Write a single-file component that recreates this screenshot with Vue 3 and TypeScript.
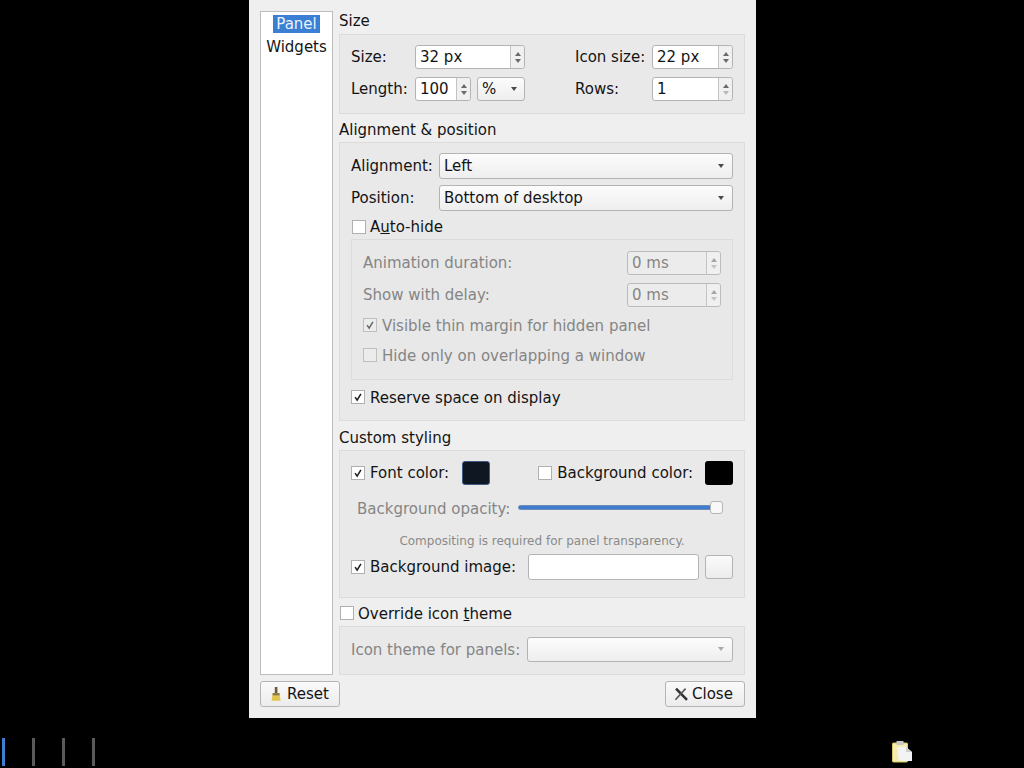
<script setup lang="ts">
const marks: string[] = ['active', '', '', '']
</script>

<template>
  <div class="desktop">
    <div class="dialog">
      <div class="main">
        <ul class="nav">
          <li><span class="sel">Panel</span></li>
          <li>Widgets</li>
        </ul>
        <div class="content">
          <div class="head first">Size</div>
          <section class="frame size-frame">
            <div class="row">
              <label class="l-size">Size:</label>
              <div class="spin w110"><span class="val">32 px</span><span class="arrows"><i class="up"></i><i class="down"></i></span></div>
              <label class="l-icon">Icon size:</label>
              <div class="spin w81"><span class="val">22 px</span><span class="arrows"><i class="up"></i><i class="down"></i></span></div>
            </div>
            <div class="row">
              <label class="l-size">Length:</label>
              <div class="spin w56"><span class="val">100</span><span class="arrows"><i class="up"></i><i class="down"></i></span></div>
              <div class="combo small"><span class="val">%</span><i class="caret"></i></div>
              <label class="l-rows">Rows:</label>
              <div class="spin w81"><span class="val">1</span><span class="arrows"><i class="up"></i><i class="down dim"></i></span></div>
            </div>
          </section>

          <div class="head">Alignment &amp; position</div>
          <section class="frame align-frame">
            <div class="row r26">
              <label class="l-align">Alignment:</label>
              <div class="combo grow"><span class="val">Left</span><i class="caret"></i></div>
            </div>
            <div class="row r26">
              <label class="l-align">Position:</label>
              <div class="combo grow"><span class="val">Bottom of desktop</span><i class="caret"></i></div>
            </div>
            <div class="check autohide"><span class="box"></span><span>A<u>u</u>to-hide</span></div>
            <div class="inner disabled">
              <div class="row between">
                <label>Animation duration:</label>
                <div class="spin w94 off"><span class="val">0 ms</span><span class="arrows"><i class="up"></i><i class="down dim"></i></span></div>
              </div>
              <div class="row between">
                <label>Show with delay:</label>
                <div class="spin w94 off"><span class="val">0 ms</span><span class="arrows"><i class="up"></i><i class="down dim"></i></span></div>
              </div>
              <div class="check c1">
                <span class="box off">
                  <svg viewBox="0 0 14 14"><path d="M3.6 7.2 6 10.6 10.4 3.4" /></svg>
                </span>
                <span>Visible thin margin for hidden panel</span>
              </div>
              <div class="check c2"><span class="box off"></span><span>Hide only on overlapping a window</span></div>
            </div>
            <div class="check reserve">
              <span class="box"><svg viewBox="0 0 14 14"><path d="M3.6 7.2 6 10.6 10.4 3.4" /></svg></span>
              <span>Reserve space on display</span>
            </div>
          </section>

          <div class="head h3">Custom styling</div>
          <section class="frame custom-frame">
            <div class="row colors">
              <div class="check"><span class="box"><svg viewBox="0 0 14 14"><path d="M3.6 7.2 6 10.6 10.4 3.4" /></svg></span><span>Font color:</span></div>
              <span class="swatch navy"></span>
              <div class="check bgcheck"><span class="box"></span><span>Background color:</span></div>
              <span class="swatch black"></span>
            </div>
            <div class="row opacity">
              <label class="dimtext">Background opacity:</label>
              <div class="slider"><span class="track"></span><span class="handle"></span></div>
            </div>
            <div class="note">Compositing is required for panel transparency.</div>
            <div class="row image">
              <div class="check"><span class="box"><svg viewBox="0 0 14 14"><path d="M3.6 7.2 6 10.6 10.4 3.4" /></svg></span><span>Background image:</span></div>
              <div class="field"></div>
              <div class="btn blank"></div>
            </div>
          </section>

          <div class="check override"><span class="box"></span><span>Override icon <u>t</u>heme</span></div>
          <section class="frame theme-frame">
            <div class="row">
              <label class="dimtext">Icon theme for panels:</label>
              <div class="combo theme off"><i class="caret soft"></i></div>
            </div>
          </section>
        </div>
      </div>
      <div class="footer">
        <button class="btn action reset">
          <svg width="16" height="16" viewBox="0 0 16 16">
            <rect x="6.8" y="1" width="2.6" height="7" fill="#6d5a34" />
            <path d="M4.6 8h7l1 6.8H3.6z" fill="#e3c64f" />
            <rect x="4.6" y="7" width="7" height="2.4" fill="#8a7a4c" />
          </svg>
          <span>Reset</span>
        </button>
        <button class="btn action close">
          <svg width="14" height="14" viewBox="0 0 14 14">
            <path d="M2 1.6 13 12.8" stroke="#333" stroke-width="2.6" fill="none" />
            <path d="M11.6 1.6 1.4 12.8" stroke="#555" stroke-width="1.6" fill="none" />
          </svg>
          <span>Close</span>
        </button>
      </div>
    </div>
    <div class="taskbar">
      <div class="marks">
        <span v-for="(m, i) in marks" :key="i" class="mark" :class="m"></span>
      </div>
      <svg class="clip" width="24" height="24" viewBox="0 0 24 24">
        <rect x="2.5" y="3" width="15" height="19" rx="1" fill="#f4ecb0" stroke="#d8c765" />
        <rect x="6.5" y="1" width="7" height="4" fill="#c9c9c9" />
        <path d="M7 7h9l6 5v9H9z" fill="#f3f3f3" />
        <path d="M16 7l6 5h-6z" fill="#cfcfcf" />
      </svg>
    </div>
  </div>
</template>

<style scoped>
.desktop {
  width: 1024px;
  height: 768px;
  background: #000;
  display: flex;
  flex-direction: column;
  overflow: hidden;
  font-family: "DejaVu Sans", sans-serif;
  font-size: 15px;
  color: #141414;
}
.dialog {
  margin-left: 249px;
  width: 507px;
  height: 718px;
  box-sizing: border-box;
  padding: 11px 11px 0;
  background: #efefef;
  display: flex;
  flex-direction: column;
}
.main { display: flex; gap: 6px; height: 664px; }
.nav {
  list-style: none;
  margin: 0;
  padding: 3px 0 0;
  width: 73px;
  box-sizing: border-box;
  background: #fff;
  border: 1px solid #bdbdbd;
}
.nav li { height: 23px; line-height: 19px; display: flex; justify-content: center; align-items: flex-start; }
.sel { background: #3b7fd4; color: #eaf2fb; padding: 0 3px; height: 18px; line-height: 19px; }
.content { width: 406px; display: flex; flex-direction: column; }
.head { height: 23px; margin-top: 5px; line-height: 23px; }
.head.first { margin-top: 0; line-height: 20px; }
.head.h3 { margin-top: 6px; }
.frame {
  box-sizing: border-box;
  border: 1px solid #dcdcdc;
  background: #e9e9e9;
  padding: 10px 11px;
}
.size-frame { height: 80px; display: flex; flex-direction: column; gap: 8px; }
.align-frame { height: 279px; }
.custom-frame { height: 148px; position: relative; }
.theme-frame { height: 49px; }
.row { display: flex; align-items: center; height: 24px; }
.row label, .val, .check > span:last-child, .action span { line-height: 18px; padding-bottom: 1px; }
.c1 > span:last-child, .c2 > span:last-child, .reserve > span:last-child, .override > span:last-child { padding-bottom: 0; padding-top: 1px; }
.opacity label, .theme-frame label { padding-bottom: 0; padding-top: 1px; }
.r26 { height: 26px; margin-bottom: 6px; }
.between { justify-content: space-between; margin-bottom: 8px; }
.l-size { width: 64px; }
.l-icon { width: 77px; margin-left: 50px; }
.l-rows { width: 77px; margin-left: 50px; }
.l-align { width: 88px; }
.val { padding-left: 4px; }
.spin {
  box-sizing: border-box;
  height: 24px;
  border: 1px solid #b4b4b4;
  border-radius: 3px;
  background: #fff;
  display: flex;
  align-items: center;
  justify-content: space-between;
}
.spin.off { background: #ececec; color: #858585; border-color: #bcbcbc; }
.w110 { width: 110px; }
.w81 { width: 81px; }
.w56 { width: 56px; }
.w94 { width: 94px; }
.arrows {
  width: 13px;
  height: 22px;
  border-left: 1px solid #c4c4c4;
  background: #f0f0f0;
  display: flex;
  flex-direction: column;
  align-items: center;
  justify-content: center;
  gap: 3px;
  border-radius: 0 3px 3px 0;
}
.up, .down, .caret { display: block; width: 0; height: 0; border-left: 3.5px solid transparent; border-right: 3.5px solid transparent; }
.up { border-bottom: 4px solid #6a6a6a; }
.down { border-top: 4px solid #6a6a6a; }
.down.dim { border-top-color: #b8b8b8; }
.off .up { border-bottom-color: #a6a6a6; }
.off .down { border-top-color: #c4c4c4; }
.combo {
  box-sizing: border-box;
  height: 26px;
  border: 1px solid #b4b4b4;
  border-radius: 3px;
  background: linear-gradient(#fcfcfc, #eeeeee);
  display: flex;
  align-items: center;
  justify-content: space-between;
  padding-right: 8px;
}
.combo.small { width: 48px; height: 24px; margin-left: 6px; padding-right: 7px; }
.combo.grow { flex: 1; }
.combo.theme { margin-left: auto; width: 206px; height: 25px; }
.caret { border-top: 4px solid #4a4a4a; }
.caret.soft { border-top-color: #a8a8a8; margin-left: auto; }
.check { display: flex; align-items: center; gap: 5px; height: 20px; }
.box {
  box-sizing: border-box;
  width: 14px;
  height: 14px;
  border: 1px solid #b0b0b0;
  background: #fff;
  display: block;
  flex: none;
}
.box svg { display: block; width: 12px; height: 12px; }
.box path { fill: none; stroke: #1c1c1c; stroke-width: 1.8; }
.box.off { background: #ececec; border-color: #c0c0c0; }
.box.off path { stroke: #6a6a6a; }
.autohide { margin-left: 1px; gap: 4px; }
.inner {
  box-sizing: border-box;
  height: 141px;
  margin-top: 2px;
  border: 1px solid #dcdcdc;
  background: #e8e8e8;
  padding: 11px 11px 0;
  color: #858585;
}
.c2 { margin-top: 10px; }
.reserve { margin-top: 7px; }
.swatch { box-sizing: border-box; display: block; width: 28px; height: 24px; border-radius: 3px; }
.navy { background: #0f1722; border: 1px solid #3e5a80; margin-left: 13px; }
.black { background: #000; margin-left: auto; }
.bgcheck { margin-left: 48px; }
.opacity { margin-top: 11px; padding-left: 6px; }
.dimtext { color: #858585; }
.slider { position: relative; width: 205px; height: 14px; margin-left: 8px; }
.track {
  position: absolute;
  left: 0;
  right: 0;
  top: 4px;
  height: 5px;
  border-radius: 3px;
  background: #3f7bd0;
  border: 1px solid #6e8db5;
  box-sizing: border-box;
}
.handle {
  position: absolute;
  right: 0;
  top: 0;
  box-sizing: border-box;
  width: 13px;
  height: 13px;
  border-radius: 3px;
  border: 1px solid #b4b4b4;
  background: #f8f8f8;
}
.note { font-size: 12px; color: #8a8a8a; text-align: center; height: 20px; margin-top: 11px; line-height: 20px; }
.image { height: 26px; margin-top: 3px; }
.field {
  box-sizing: border-box;
  width: 171px;
  height: 26px;
  margin-left: 12px;
  border: 1px solid #b4b4b4;
  border-radius: 3px;
  background: #fff;
}
.btn {
  box-sizing: border-box;
  border: 1px solid #b4b4b4;
  border-radius: 3px;
  background: linear-gradient(#fafafa, #ececec);
  font: inherit;
  color: inherit;
}
.blank { width: 28px; height: 24px; margin-left: auto; }
.override { height: 28px; margin-left: 1px; gap: 4px; padding-top: 2px; box-sizing: border-box; }
.footer { display: flex; justify-content: space-between; margin-top: 6px; }
.action { height: 26px; width: 80px; display: flex; align-items: center; padding: 0; }
.reset { padding-left: 7px; gap: 3px; }
.close { padding-left: 8px; gap: 4px; }
.taskbar { flex: 1; position: relative; display: flex; align-items: center; justify-content: space-between; padding: 0 110px 0 2px; }
.marks { display: flex; gap: 27px; margin-top: 18px; }
.mark { display: block; width: 3px; height: 28px; background: #5a5a5a; }
.mark.active { background: #3f7fd0; }
.clip { margin-top: 18px; }
</style>
